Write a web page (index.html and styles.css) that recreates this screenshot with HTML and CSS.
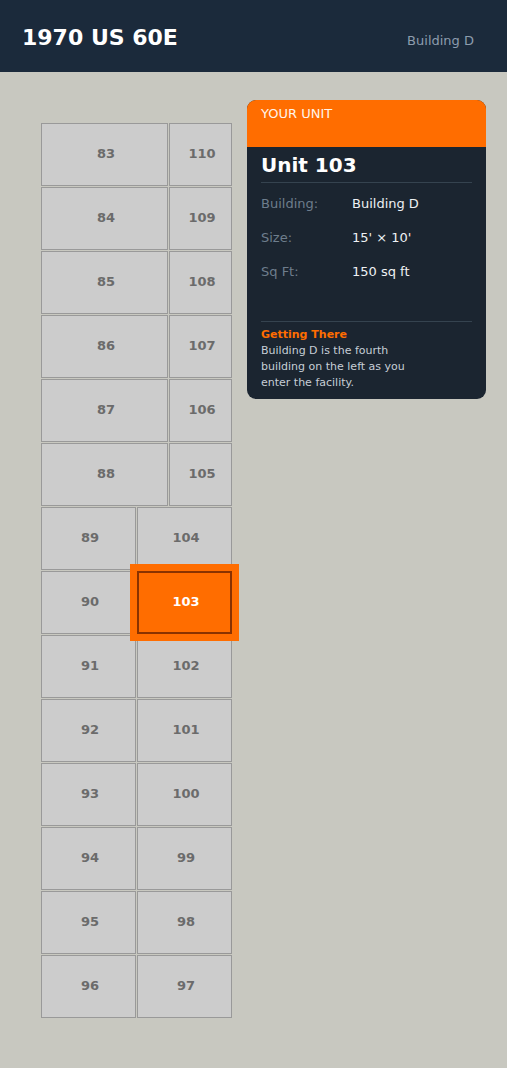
FILE: index.html
```html
<!DOCTYPE html>
<html lang="en">
<head>
<meta charset="utf-8">
<title>1970 US 60E - Building D</title>
<link rel="stylesheet" href="styles.css">
</head>
<body>
<header class="topbar">
  <h1 class="site-title">1970 US 60E</h1>
  <span class="building-name">Building D</span>
</header>
<main class="layout">
  <section class="unit-map">
    <div class="unit-row narrow"><div class="unit wide">83</div><div class="unit small">110</div></div>
    <div class="unit-row narrow"><div class="unit wide">84</div><div class="unit small">109</div></div>
    <div class="unit-row narrow"><div class="unit wide">85</div><div class="unit small">108</div></div>
    <div class="unit-row narrow"><div class="unit wide">86</div><div class="unit small">107</div></div>
    <div class="unit-row narrow"><div class="unit wide">87</div><div class="unit small">106</div></div>
    <div class="unit-row narrow"><div class="unit wide">88</div><div class="unit small">105</div></div>
    <div class="unit-row"><div class="unit half">89</div><div class="unit half">104</div></div>
    <div class="unit-row"><div class="unit half">90</div><div class="unit half active">103</div></div>
    <div class="unit-row"><div class="unit half">91</div><div class="unit half">102</div></div>
    <div class="unit-row"><div class="unit half">92</div><div class="unit half">101</div></div>
    <div class="unit-row"><div class="unit half">93</div><div class="unit half">100</div></div>
    <div class="unit-row"><div class="unit half">94</div><div class="unit half">99</div></div>
    <div class="unit-row"><div class="unit half">95</div><div class="unit half">98</div></div>
    <div class="unit-row"><div class="unit half">96</div><div class="unit half">97</div></div>
  </section>
  <aside class="info-card">
    <div class="card-head">YOUR UNIT</div>
    <div class="card-body">
      <h2 class="unit-title">Unit 103</h2>
      <dl class="details">
        <div class="detail"><dt>Building:</dt><dd>Building D</dd></div>
        <div class="detail"><dt>Size:</dt><dd>15' × 10'</dd></div>
        <div class="detail"><dt>Sq Ft:</dt><dd>150 sq ft</dd></div>
      </dl>
      <div class="directions">
        <h3 class="directions-title">Getting There</h3>
        <p class="directions-text">Building D is the fourth building on the left as you enter the facility.</p>
      </div>
    </div>
  </aside>
</main>
</body>
</html>
```
FILE: styles.css
```css
* { box-sizing: border-box; }
html, body { margin: 0; padding: 0; }
body {
  background: #c8c8c0;
  font-family: "DejaVu Sans", "Noto Sans", sans-serif;
  min-height: 1068px;
}
.topbar {
  height: 72px;
  background: #1b2a3b;
  display: flex;
  align-items: baseline;
  justify-content: space-between;
  padding: 25px 33px 0 22px;
}
.site-title {
  margin: 0;
  font-size: 22px;
  font-weight: bold;
  color: #ffffff;
}
.building-name {
  font-size: 13px;
  color: #8d9cad;
}
.layout {
  display: flex;
  align-items: flex-start;
  padding: 28px 0 0 41px;
}
.unit-map {
  margin-top: 23px;
  display: flex;
  flex-direction: column;
  gap: 1px;
  width: 191px;
}
.unit-row {
  display: flex;
  gap: 1px;
}
.unit {
  height: 63px;
  background: #cccccc;
  border: 1px solid #999999;
  display: flex;
  align-items: center;
  justify-content: center;
  padding: 0 0 3px 3px;
  font-size: 13px;
  font-weight: bold;
  color: #6b6b6b;
}
.unit.wide { width: 127px; }
.unit.small { width: 63px; }
.unit.half { width: 95px; }
.unit.active {
  position: relative;
  z-index: 1;
  background: #ff6d00;
  border: 2px solid #8a3200;
  box-shadow: 0 0 0 7px #ff6d00;
  color: #ffffff;
}
.info-card {
  margin-left: 15px;
  width: 239px;
  border-radius: 9px;
  overflow: hidden;
  background: #1b2530;
}
.card-head {
  height: 47px;
  background: #ff6d00;
  color: #fff4ea;
  font-size: 13px;
  padding: 6px 14px 0;
}
.card-body {
  padding: 6px 14px 8px;
}
.unit-title {
  margin: 0;
  font-size: 20px;
  font-weight: bold;
  color: #ffffff;
  padding-bottom: 5px;
  border-bottom: 1px solid #35434f;
}
.details {
  margin: 13px 0 0;
  display: flex;
  flex-direction: column;
  gap: 19px;
  padding-bottom: 42px;
  border-bottom: 1px solid #35434f;
}
.detail {
  display: flex;
  font-size: 13px;
  line-height: 15px;
}
.detail dt {
  width: 91px;
  color: #6e7d8c;
}
.detail dd {
  margin: 0;
  color: #eef1f4;
}
.directions {
  padding-top: 5px;
}
.directions-title {
  margin: 0;
  font-size: 11px;
  line-height: 16px;
  font-weight: bold;
  color: #ff6d00;
}
.directions-text {
  margin: 0;
  max-width: 165px;
  font-size: 11px;
  line-height: 16px;
  color: #c6ced6;
}
```
